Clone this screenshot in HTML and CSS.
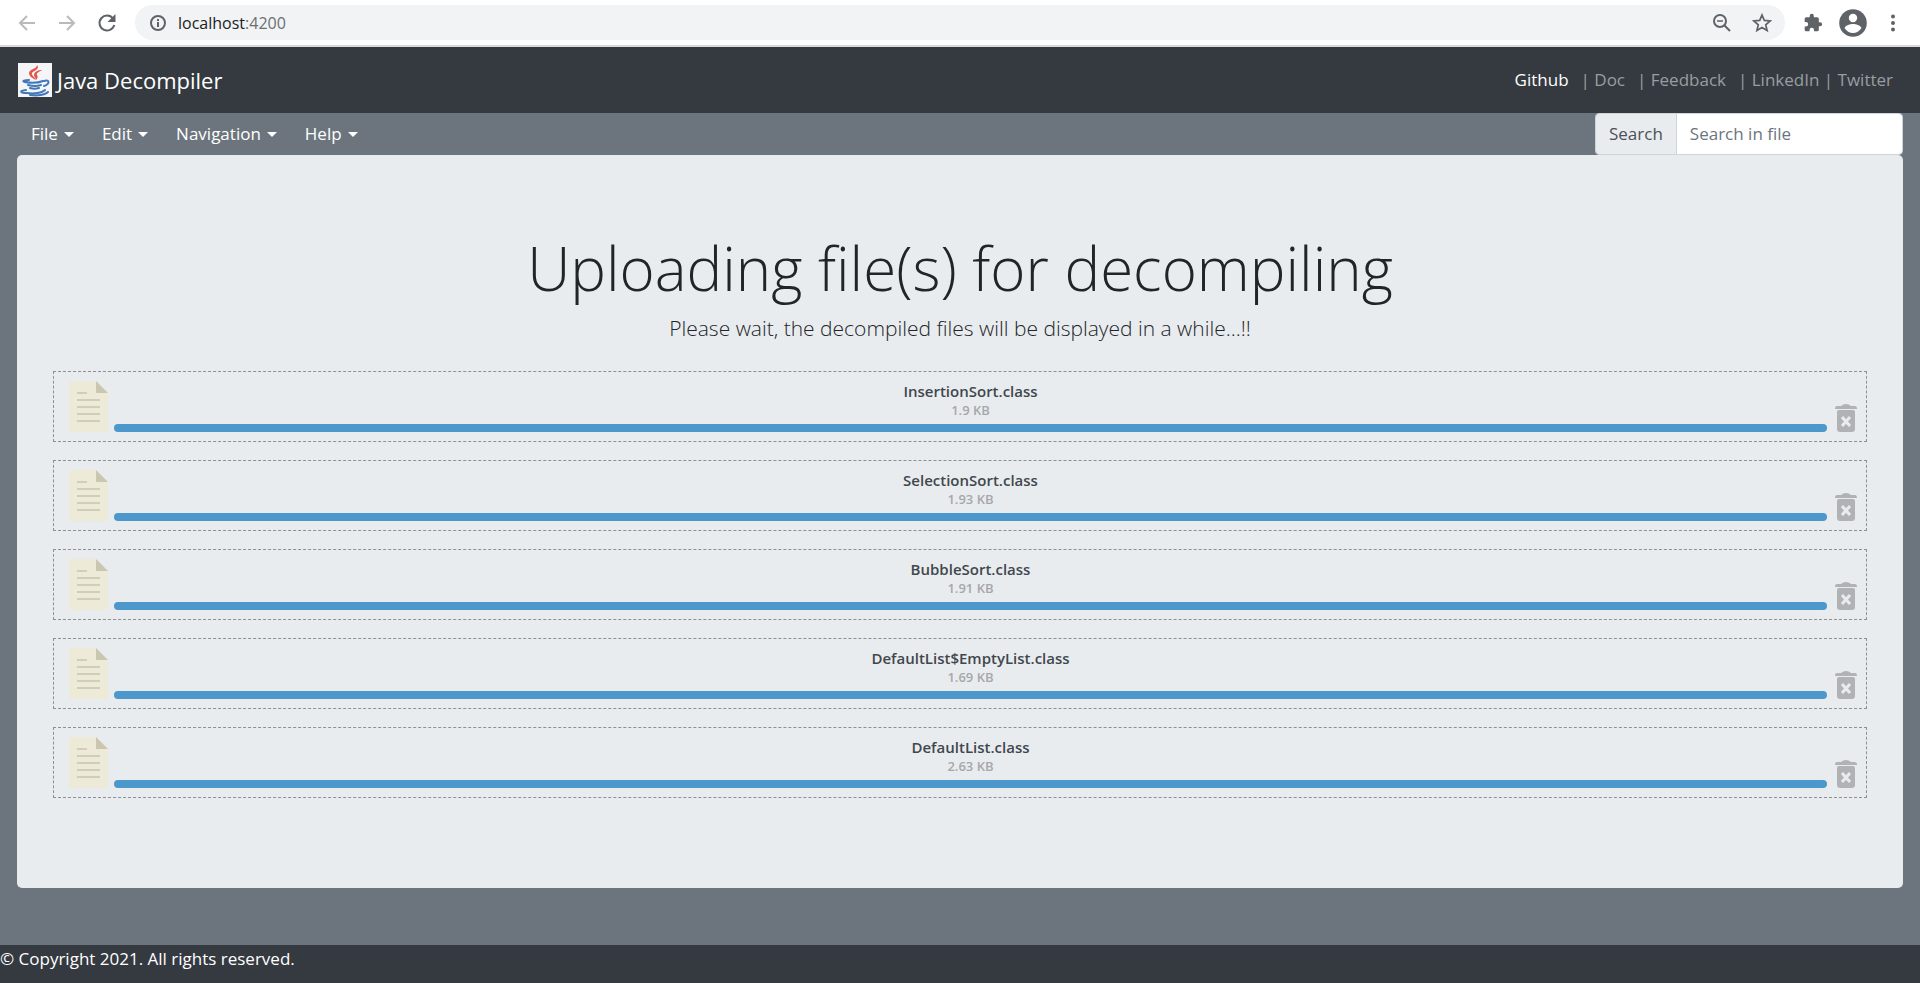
FILE: index.html
```html
<!DOCTYPE html>
<html lang="en">
<head>
<meta charset="utf-8">
<meta name="viewport" content="width=device-width, initial-scale=1">
<title>Java Decompiler</title>
<link rel="stylesheet" href="styles.css">
</head>
<body>
<svg class="defs" aria-hidden="true">
  <symbol id="file" viewBox="0 0 39 51">
    <path fill="#eeead8" d="M2 0H27L39 12V49Q39 51 37 51H2Q0 51 0 49V2Q0 0 2 0Z"/>
    <path fill="#cbc6b0" d="M27 0 39 12H27Z"/>
    <path stroke="#d2cdb9" stroke-width="2" d="M8 12H18M8 19H31M8 26H31M8 33H31M8 40H31"/>
  </symbol>
  <symbol id="trash" viewBox="0 0 22 28">
    <path fill="#b1b2b3" d="M2 2H6Q8 0 11 0T16 2H20Q22 2 22 5H0Q0 2 2 2ZM4 6H18Q20 6 20 8V25Q20 28 17 28H5Q2 28 2 25V8Q2 6 4 6Z"/>
    <path stroke="#e9ecef" stroke-width="3" d="m7 13 8 9M15 13l-8 9"/>
  </symbol>
</svg>
<div class="browser">
  <button class="tool" disabled aria-label="Back"><svg width="20" height="20" viewBox="0 0 20 20" fill="none" stroke="#bababa" stroke-width="2"><path d="M18 10H3M10 3 3 10l7 7"/></svg></button>
  <button class="tool" disabled aria-label="Forward"><svg width="20" height="20" viewBox="0 0 20 20" fill="none" stroke="#bababa" stroke-width="2"><path d="M2 10h15M10 3l7 7-7 7"/></svg></button>
  <button class="tool" aria-label="Reload"><svg width="20" height="20" viewBox="0 0 20 20" fill="none" stroke="#5f6368" stroke-width="2"><path d="M16 5.500A7.500 7.500 0 1 0 17.300 12"/><path fill="#5f6368" stroke="none" d="M18.500 1v8h-8z"/></svg></button>
  <div class="address">
    <svg width="18" height="18" viewBox="0 0 18 18" fill="none" stroke="#5f6368" stroke-width="2"><circle cx="9" cy="9" r="7"/><path d="M9 8v5M9 5v2"/></svg>
    <div class="url">localhost<span class="port">:4200</span></div>
    <button class="tool" aria-label="Zoom"><svg width="20" height="20" viewBox="0 0 20 20" fill="none" stroke="#5f6368" stroke-width="2"><circle cx="8" cy="8" r="6"/><path d="m12 12 6 6"/><path stroke-width="1.500" d="M5 8h6"/></svg></button>
    <button class="tool" aria-label="Bookmark"><svg width="20" height="20" viewBox="0 0 20 20" fill="none" stroke="#5f6368" stroke-width="1.700"><path d="m10 2 2.300 5.400 5.900.5-4.500 3.900 1.400 5.700-5.100-3.100L4.900 17.500l1.400-5.700L1.800 7.900l5.900-.5z"/></svg></button>
  </div>
  <button class="tool" aria-label="Extensions"><svg width="20" height="20" viewBox="0 0 24 24" fill="#5f6368"><path d="M20.500 11H19V7a2 2 0 0 0-2-2h-4V3.500a2.500 2.500 0 0 0-5 0V5H4a2 2 0 0 0-2 2v3.800h1.500a2.700 2.700 0 0 1 0 5.400H2V20a2 2 0 0 0 2 2h3.800v-1.500a2.700 2.700 0 0 1 5.400 0V22H17a2 2 0 0 0 2-2v-4h1.500a2.500 2.500 0 0 0 0-5z"/></svg></button>
  <button class="tool avatar" aria-label="Profile"><svg width="28" height="28" viewBox="0 0 28 28"><circle cx="14" cy="14" r="13.800" fill="#5f6368"/><circle cx="14" cy="9" r="4.200" fill="#fff"/><path fill="#fff" d="M5.500 19c1.500-3 5.500-4 8.500-4s7 1 8.500 4c-2 3-5 5-8.500 5s-6.500-2-8.500-5z"/></svg></button>
  <button class="tool" aria-label="Menu"><svg width="20" height="20" viewBox="0 0 20 20" fill="#5f6368"><circle cx="10" cy="3.500" r="2"/><circle cx="10" cy="10" r="2"/><circle cx="10" cy="16.500" r="2"/></svg></button>
</div>
<header class="navbar">
  <a class="brand" href="#">
    <svg width="34" height="34" viewBox="0 0 34 34"><path fill="#f5f5f7" d="M0 0h34v34H0z"/>
      <g fill="#e2574c"><path d="M19 2c4 5-6 6-5 9 0 2 3 3 4 6-4-2-7-4-7-7 0-4 8-4 8-8z"/><path d="M24 7c-3 2-6 3-5 5 1 1 1 3-1 5 0-2-2-3-2-5 0-3 4-5 8-5z"/></g>
      <g fill="none" stroke="#4078ba" stroke-linecap="round"><path stroke-width="2" d="M11 17c-4 0-8 1-4 2 5 1 13 1 18-1M10 22c4 1 10 1 13 0M12 25c3 1 6 1 9 0"/><path stroke-width="2" d="M26 18c6-2 6 3 0 5"/><path stroke-width="2" d="M8 27c-8 1-5 3 1 3 7 1 15 0 18-3M12 32c7 1 15 0 18-3"/></g></svg>
    <span>Java Decompiler</span>
  </a>
  <nav class="links">
    <a class="active" href="#">Github</a>
    <a href="#">| Doc</a>
    <a href="#">| Feedback</a>
    <span class="pair"><a href="#">| LinkedIn</a> <a href="#">| Twitter</a></span>
  </nav>
</header>
<div class="menubar">
  <nav class="menus">
    <button class="menu">File</button>
    <button class="menu">Edit</button>
    <button class="menu">Navigation</button>
    <button class="menu">Help</button>
  </nav>
  <div class="search">
    <label for="q">Search</label>
    <input id="q" type="text" placeholder="Search in file">
  </div>
</div>
<main class="panel">
  <h1>Uploading file(s) for decompiling</h1>
  <p class="lead">Please wait, the decompiled files will be displayed in a while...!!</p>
  <ul class="files">
    <li class="file">
      <svg class="doc"><use href="#file"/></svg>
      <div class="info"><label class="name" for="f1">InsertionSort.class</label><span class="size">1.9 KB</span><progress id="f1" value="100" max="100"></progress></div>
      <button class="remove" aria-label="Remove InsertionSort.class"><svg class="bin"><use href="#trash"/></svg></button>
    </li>
    <li class="file">
      <svg class="doc"><use href="#file"/></svg>
      <div class="info"><label class="name" for="f2">SelectionSort.class</label><span class="size">1.93 KB</span><progress id="f2" value="100" max="100"></progress></div>
      <button class="remove" aria-label="Remove SelectionSort.class"><svg class="bin"><use href="#trash"/></svg></button>
    </li>
    <li class="file">
      <svg class="doc"><use href="#file"/></svg>
      <div class="info"><label class="name" for="f3">BubbleSort.class</label><span class="size">1.91 KB</span><progress id="f3" value="100" max="100"></progress></div>
      <button class="remove" aria-label="Remove BubbleSort.class"><svg class="bin"><use href="#trash"/></svg></button>
    </li>
    <li class="file">
      <svg class="doc"><use href="#file"/></svg>
      <div class="info"><label class="name" for="f4">DefaultList$EmptyList.class</label><span class="size">1.69 KB</span><progress id="f4" value="100" max="100"></progress></div>
      <button class="remove" aria-label="Remove DefaultList$EmptyList.class"><svg class="bin"><use href="#trash"/></svg></button>
    </li>
    <li class="file">
      <svg class="doc"><use href="#file"/></svg>
      <div class="info"><label class="name" for="f5">DefaultList.class</label><span class="size">2.63 KB</span><progress id="f5" value="100" max="100"></progress></div>
      <button class="remove" aria-label="Remove DefaultList.class"><svg class="bin"><use href="#trash"/></svg></button>
    </li>
  </ul>
</main>
<footer class="footer">© Copyright 2021. All rights reserved.</footer>
</body>
</html>
```
FILE: styles.css
```css
* { box-sizing: border-box; }
body {
  margin: 0;
  min-height: 100vh;
  display: flex;
  flex-direction: column;
  background: #6c757d;
  color: #212529;
  font: 17px/26px "Open Sans", "Noto Sans", sans-serif;
}
button, input { font: inherit; }
a { color: inherit; text-decoration: none; }
.defs { display: none; }
svg { display: block; flex: none; }

.browser {
  display: flex;
  align-items: center;
  gap: 20px;
  padding: 5px 17px;
  background: #fff;
  border-bottom: 2px solid #d9dadc;
}
.tool { padding: 0; border: 0; background: none; }
.avatar { margin: 0 -4px; }
.address {
  flex: 1;
  display: flex;
  align-items: center;
  gap: 20px;
  height: 35px;
  margin: 0 -2px;
  padding: 0 13px 0 14px;
  border-radius: 18px;
  background: #f1f3f4;
}
.url { flex: 1; margin-left: -9px; font-size: 16px; color: #202124; }
.port { color: #6b6f73; }

.navbar {
  display: flex;
  align-items: center;
  justify-content: space-between;
  height: 66px;
  padding: 0 27px 0 18px;
  background: #343a40;
}
.brand { display: flex; align-items: center; gap: 5px; color: #fff; font-size: 22px; }
.links { display: flex; gap: 12px; color: #9a9da0; }
.links .active { color: #fff; }

.menubar { display: flex; justify-content: space-between; height: 42px; padding: 0 17px; }
.menus { display: flex; align-items: center; }
.menu {
  display: flex;
  align-items: center;
  gap: 6px;
  padding: 0 14px;
  border: 0;
  background: none;
  color: #fff;
}
.menu::after { content: ""; border: 5px solid transparent; border-top-color: #fff; border-bottom: 0; }
.search { display: flex; width: 308px; border: 1px solid #ced4da; border-radius: 4px; overflow: hidden; }
.search label { display: flex; align-items: center; padding: 0 13px; background: #e9ecef; color: #495057; }
.search input { flex: 1; min-width: 0; padding: 0 13px; border: 0; border-left: 1px solid #ced4da; background: #fff; }
.search input::placeholder { color: #6c757d; }

.panel { margin: 0 17px; padding: 70px 36px 90px; border-radius: 5px; background: #e9ecef; text-align: center; }
h1 { margin: 0; font-size: 60px; line-height: 86px; font-weight: 300; }
.lead { margin: 0; font-size: 21px; line-height: 34px; font-weight: 300; }
.files { display: flex; flex-direction: column; gap: 18px; margin: 26px 0 0; padding: 0; list-style: none; }
.file { display: flex; align-items: flex-end; padding: 9px 9px 9px 15px; border: 1px dashed #8b9197; }
.doc { width: 39px; height: 51px; }
.info { flex: 1; display: flex; flex-direction: column; align-items: center; margin: 0 8px 0 6px; }
.name { font-size: 15px; line-height: 20px; font-weight: 600; color: #3f474d; }
.size { font-size: 13px; line-height: 18px; font-weight: 600; color: #a5a8aa; }
progress {
  appearance: none;
  width: 100%;
  height: 8px;
  margin-top: 5px;
  border: 0;
  border-radius: 4px;
  overflow: hidden;
  background: #4c97cb;
}
progress::-webkit-progress-bar { background: #dfe3e6; }
progress::-webkit-progress-value { background: #4c97cb; }
.remove { padding: 0; border: 0; background: none; }
.bin { width: 22px; height: 28px; }

.footer { margin-top: auto; min-height: 38px; padding-top: 1px; background: #343a40; color: #fff; }
```
